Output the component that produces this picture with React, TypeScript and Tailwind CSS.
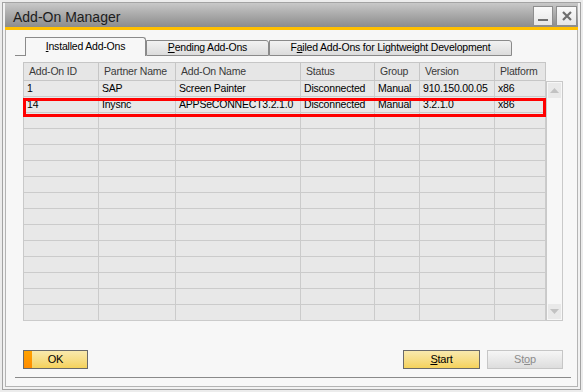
import React from "react";

const columns = [
  { label: "Add-On ID", width: "w-[75px]" },
  { label: "Partner Name", width: "w-[77px]" },
  { label: "Add-On Name", width: "w-[125px]" },
  { label: "Status", width: "w-[74px]" },
  { label: "Group", width: "w-[45px]" },
  { label: "Version", width: "w-[75px]" },
  { label: "Platform", width: "w-[51px]" },
];

const rows: string[][] = [
  ["1", "SAP", "Screen Painter", "Disconnected", "Manual", "910.150.00.05", "x86"],
  ["14", "Inysnc", "APPSeCONNECT3.2.1.0", "Disconnected", "Manual", "3.2.1.0", "x86"],
  ...Array.from({ length: 13 }, () => ["", "", "", "", "", "", ""]),
];

const Underlined = ({ pre, u, post }: { pre?: string; u: string; post: string }) => (
  <span>
    {pre}
    <span className="underline underline-offset-[1px]">{u}</span>
    {post}
  </span>
);

const App = () => {
  return (
    <div
      className="w-[583px] h-[392px] bg-[#ececec] p-[2px] text-[10.5px] tracking-[-0.2px] text-black"
      style={{ fontFamily: '"Liberation Sans", Arial, sans-serif' }}
    >
      <div className="h-full border border-[#a3a3a3] bg-[#f2f2f2] px-[2px] pb-[2px] flex flex-col">
        {/* title bar */}
        <div className="h-[24px] shrink-0 bg-gradient-to-b from-[#c8c8c8] to-[#8c8c8c] flex items-center pl-[8px] pr-[1px]">
          <span className="text-[14px] tracking-normal text-[#1c1c1c] pt-[5px]">Add-On Manager</span>
          <div className="ml-auto flex gap-[3px] self-start mt-[3px]">
            <div className="w-[20px] h-[20px] border border-[#8e8e8e] bg-gradient-to-b from-[#fafafa] to-[#e6e6e6] flex items-end justify-center pb-[4px]">
              <div className="w-[10px] h-[2px] bg-[#707070]" />
            </div>
            <div className="w-[21px] h-[20px] border border-[#8e8e8e] bg-gradient-to-b from-[#fafafa] to-[#e6e6e6] flex items-center justify-center">
              <svg width="10" height="10" viewBox="0 0 10 10">
                <path d="M1 1 L9 9 M9 1 L1 9" stroke="#6e6e6e" strokeWidth="2.2" />
              </svg>
            </div>
          </div>
        </div>
        <div className="h-[3px] shrink-0 bg-[#ffc000]" />

        {/* content */}
        <div className="flex-1 border-x border-b border-[#b4b4b4] bg-[#f7f7f7] flex flex-col">
          {/* tabs */}
          <div className="mt-[7px] ml-[9px] flex items-end h-[19px]">
            <div className="w-[10px] border-b border-[#8a8a8a]" />
            <div className="w-[121px] h-[19px] border-t border-l border-r border-[#8a8a8a] rounded-tr-[3px] bg-[#f7f7f7] flex items-center justify-center pb-[1px]">
              <Underlined u="I" post="nstalled Add-Ons" />
            </div>
            <div className="w-[123px] h-[16px] border border-[#8a8a8a] rounded-tr-[3px] bg-gradient-to-b from-[#f2f2f2] to-[#dcdcdc] flex items-center justify-center">
              <Underlined u="P" post="ending Add-Ons" />
            </div>
            <div className="w-[243px] h-[16px] border border-[#8a8a8a] rounded-tr-[3px] bg-gradient-to-b from-[#f2f2f2] to-[#dcdcdc] flex items-center justify-center">
              <Underlined pre="F" u="a" post="iled Add-Ons for Lightweight Development" />
            </div>
          </div>

          {/* grid */}
          <div className="relative mt-[6px] ml-[17px] w-[540px]">
            <div className="flex w-[523px] border-l border-t border-[#c6c6c6] bg-[#e6e6e6]">
              {columns.map((c) => (
                <div
                  key={c.label}
                  className={`${c.width} h-[18px] border-r border-b border-[#c6c6c6] pl-[5px] flex items-center text-[#3a3a3a] whitespace-nowrap`}
                >
                  {c.label}
                </div>
              ))}
            </div>
            <div className="flex">
              <div className="w-[523px] border-l border-[#c9c9c9] bg-[#e8e8e8]">
                {rows.map((r, i) => (
                  <div key={i} className="flex h-[16px]">
                    {r.map((v, j) => (
                      <div
                        key={j}
                        className={`${columns[j].width} border-r border-b border-[#cbcbcb] pl-[3px] flex items-center whitespace-nowrap`}
                      >
                        {v}
                      </div>
                    ))}
                  </div>
                ))}
              </div>
              <div className="w-[17px] border border-[#c9c9c9] bg-[#f7f7f7] flex flex-col justify-between p-[1px]">
                <div className="h-[15px] bg-[#e9e9e9] flex items-center justify-center">
                  <svg width="9" height="5" viewBox="0 0 9 5">
                    <path d="M0 5 L4.5 0 L9 5 Z" fill="#c2c2c2" />
                  </svg>
                </div>
                <div className="h-[15px] bg-[#e9e9e9] flex items-center justify-center">
                  <svg width="9" height="5" viewBox="0 0 9 5">
                    <path d="M0 0 L9 0 L4.5 5 Z" fill="#c2c2c2" />
                  </svg>
                </div>
              </div>
            </div>
            {/* highlight annotation */}
            <div className="absolute left-0 top-[36px] w-[523px] h-[19px] border-[3px] border-[#ff0000] pointer-events-none" />
          </div>

          {/* buttons */}
          <div className="mt-[29px] ml-[17px] mr-[14px] flex items-center">
            <button className="w-[65px] h-[19px] border border-[#6a6a6a] bg-gradient-to-b from-[#f9e9ad] to-[#f5d25a] flex items-stretch p-0">
              <span className="w-[8px] bg-gradient-to-b from-[#ffa200] to-[#ff8c00]" />
              <span className="flex-1 flex items-center justify-center pr-[8px] text-[11px]">OK</span>
            </button>
            <button className="ml-auto w-[77px] h-[19px] border border-[#6a6a6a] bg-gradient-to-b from-[#f9e9ad] to-[#f5d25a] flex items-center justify-center text-[11px]">
              <Underlined u="S" post="tart" />
            </button>
            <button className="ml-[7px] w-[76px] h-[19px] border border-[#c6c6c6] bg-gradient-to-b from-[#f6f6f6] to-[#dddddd] flex items-center justify-center text-[11px] text-[#8c8c8c]">
              <Underlined pre="St" u="o" post="p" />
            </button>
          </div>

          <div className="mt-[8px] ml-[9px] mr-[6px] h-[1px] bg-[#8a8a8a]" />
        </div>
      </div>
    </div>
  );
};

export default App;
